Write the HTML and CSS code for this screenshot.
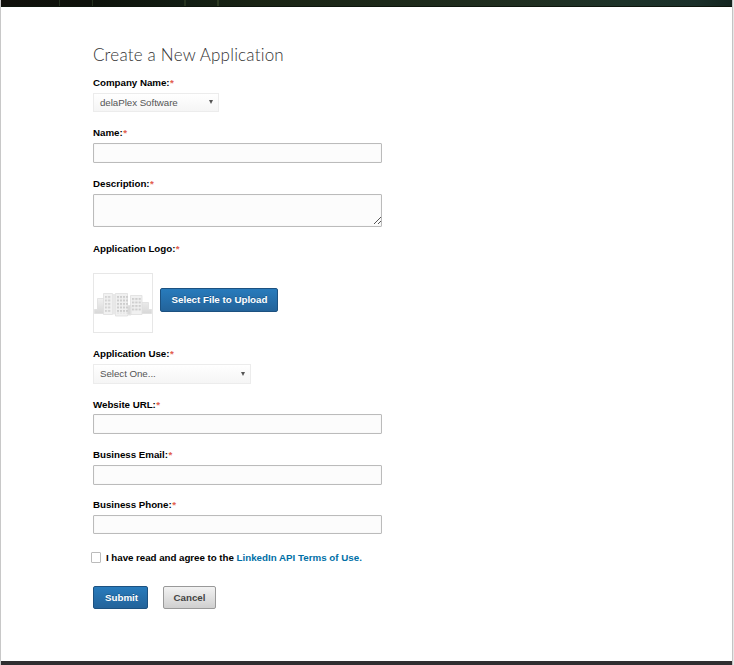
FILE: index.html
```html
<!DOCTYPE html>
<html lang="en">
<head>
<meta charset="utf-8">
<title>Create a New Application</title>
<link rel="stylesheet" href="styles.css">
</head>
<body>
<div class="page">
  <header class="topbar"></header>
  <main class="content">
    <h1 class="title">Create a New Application</h1>
    <form class="form">
      <div class="field">
        <label class="label">Company Name:<span class="req">*</span></label>
        <div class="select company"><span>delaPlex Software</span><i class="arrow"></i></div>
      </div>
      <div class="field">
        <label class="label" for="name">Name:<span class="req">*</span></label>
        <input class="input" id="name" type="text">
      </div>
      <div class="field">
        <label class="label" for="desc">Description:<span class="req">*</span></label>
        <div class="area" id="desc">
          <svg class="grip" width="7" height="7" viewBox="0 0 7 7" shape-rendering="crispEdges" fill="#555"><path d="M0 6h1v1H0zM1 5h1v1H1zM2 4h1v1H2zM3 3h1v1H3zM4 2h1v1H4zM5 1h1v1H5zM6 0h1v1H6zM4 6h1v1H4zM5 5h1v1H5zM6 4h1v1H6z"/></svg>
        </div>
      </div>
      <div class="field">
        <label class="label">Application Logo:<span class="req">*</span></label>
        <div class="upload">
          <div class="logo">
            <svg width="58" height="58" viewBox="0 0 58 58">
              <defs>
                <linearGradient id="shade" x1="0" y1="0" x2="0" y2="1"><stop offset="0" stop-color="#f1f1f1"/><stop offset="1" stop-color="#d8d8d8"/></linearGradient>
                <pattern id="win3" width="3.2" height="3.5" patternUnits="userSpaceOnUse" x="11" y="22"><rect width="2" height="2" fill="#d2d2d2"/></pattern>
                <pattern id="win4" width="3" height="3.5" patternUnits="userSpaceOnUse" x="23" y="22"><rect width="2" height="2" fill="#cecece"/></pattern>
                <pattern id="win5" width="3.3" height="3.5" patternUnits="userSpaceOnUse" x="38" y="24"><rect width="2.2" height="2" fill="#cecece"/></pattern>
              </defs>
              <g fill="url(#shade)" stroke="#dedede" stroke-width=".8">
                <path d="M.5 35.500h3v-11h7v15h-10zM47.500 28.500h7v7h3v4h-10z"/>
                <path d="M9.500 19.500h9v21h-9zM36.500 21.500h11.500v19h-11.500z" fill="#f1f1f1"/>
                <path d="M21.500 19.500h12v12h3.500v9.500h-3.500v1h-12z" fill="#f0f0f0"/>
              </g>
              <path d="M18.500 20h3v20.500h-3z" fill="#e8e8e8"/>
              <path d="M33.500 32.500l3-1v9h-3z" fill="#dadada"/>
              <path d="M11 22h6v16h-6z" fill="url(#win3)"/>
              <path d="M23 22h11v17.500H23z" fill="url(#win4)"/>
              <path d="M38 24h9v14h-9z" fill="url(#win5)"/>
            </svg>
          </div>
          <button type="button" class="btn primary file"><span>Select File to Upload</span></button>
        </div>
      </div>
      <div class="field">
        <label class="label">Application Use:<span class="req">*</span></label>
        <div class="select use"><span>Select One...</span><i class="arrow"></i></div>
      </div>
      <div class="field url">
        <label class="label" for="url">Website URL:<span class="req">*</span></label>
        <input class="input" id="url" type="text">
      </div>
      <div class="field">
        <label class="label" for="email">Business Email:<span class="req">*</span></label>
        <input class="input" id="email" type="text">
      </div>
      <div class="field">
        <label class="label" for="phone">Business Phone:<span class="req">*</span></label>
        <input class="input phone" id="phone" type="text">
      </div>
      <div class="agree"><input class="check" type="checkbox"><span class="terms">I have read and agree to the <a class="link">LinkedIn API Terms of Use.</a></span></div>
      <div class="actions">
        <button type="button" class="btn primary submit">Submit</button>
        <button type="button" class="btn cancel">Cancel</button>
      </div>
    </form>
  </main>
  <footer class="bottombar"></footer>
</div>
</body>
</html>
```
FILE: styles.css
```css
* { box-sizing: border-box; }
body {
  margin: 0;
  background: linear-gradient(90deg, #c8c8c8, #e8e8e8);
  font-family: "Liberation Sans", Arial, sans-serif;
  font-size: 9.75px;
  overflow: hidden;
}
.page {
  display: flex;
  flex-direction: column;
  width: 731px;
  height: 665px;
  margin-left: 1px;
  background: #fff;
  box-shadow: 1px 0 #c4c4c4;
}
.topbar {
  height: 7px;
  flex: none;
  border-bottom: 1px solid #0d150c;
  background:
    linear-gradient(#24301f, #24301f) 58px 0 / 1px 7px no-repeat,
    linear-gradient(#24301f, #24301f) 91px 0 / 1px 7px no-repeat,
    linear-gradient(#26331f, #26331f) 183px 0 / 2px 7px no-repeat,
    linear-gradient(#2c3a22, #2c3a22) 216px 0 / 2px 7px no-repeat,
    linear-gradient(90deg, #11110c 0, #0e120b 12%, #121d13 25%, #1a2414 35%, #202e20 70%, #1e3329 85%, #1b302a 95%, #142520 100%);
}
.content { flex: 1; padding: 38px 0 0 92px; }
.bottombar { height: 4px; flex: none; background: #2f2e30; }
.title {
  margin: 0;
  height: 32px;
  font: 300 17px/20px Lato, sans-serif;
  letter-spacing: .2px;
  color: #333;
  white-space: nowrap;
}
.form {
  display: grid;
  grid-template-rows: 50px 51px 65px 105px 51px 50px 50px 53px 34px 23px;
}
.label {
  display: block;
  height: 16px;
  line-height: 12px;
  font-weight: bold;
  letter-spacing: -.03px;
  color: #000;
  white-space: nowrap;
}
.url .label { height: 15px; }
.req { color: #e2604f; margin-left: .5px; }
.select {
  display: flex;
  align-items: center;
  justify-content: space-between;
  height: 19px;
  padding: 0 5px 0 6px;
  border: 1px solid #ececec;
  background: linear-gradient(#fff, #f5f5f5);
  color: #555;
  letter-spacing: -.05px;
}
.company { width: 126px; }
.use { width: 158px; height: 20px; padding-bottom: 1px; }
.arrow {
  border: 2.5px solid transparent;
  border-top: 4px solid #555;
  border-bottom: 0;
  margin-bottom: 1px;
}
.use .arrow { margin-bottom: 0; }
.input, .area {
  display: block;
  width: 289px;
  height: 20px;
  margin: 0;
  border: 1px solid #bbb;
  border-radius: 1px;
  background: #fcfcfc;
  box-shadow: inset 0 0 1px #ddd;
}
.phone { height: 19px; }
.area { position: relative; height: 33px; }
.grip { position: absolute; right: 0; bottom: 2px; }
.upload { display: flex; align-items: flex-start; gap: 7px; padding-top: 14px; }
.logo { width: 60px; height: 60px; border: 1px solid #e7e7e7; background: #fff; }
.logo svg { display: block; }
.btn {
  height: 23px;
  padding: 0;
  border: 1px solid #999;
  border-radius: 2px;
  font: bold 9.75px/21px "Liberation Sans", Arial, sans-serif;
  white-space: nowrap;
}
.primary {
  color: #fff;
  border-color: #1c5180;
  background: linear-gradient(#287bbc, #23639a);
  text-shadow: 0 -1px rgba(0, 0, 0, .2);
}
.file { width: 118px; height: 24px; margin-top: 15px; padding: 0 0 1px 1px; }
.agree {
  display: flex;
  align-items: flex-start;
  gap: 5px;
  margin-left: -2px;
  line-height: 12px;
  font-weight: bold;
  white-space: nowrap;
}
.terms { color: #000; letter-spacing: -.04px; }
.check {
  appearance: none;
  width: 10px;
  height: 11px;
  margin: 0;
  border: 1px solid #bbb;
  border-radius: 1px;
  background: #fff;
}
.link { color: #006fa6; letter-spacing: .01px; }
.actions { display: flex; gap: 15px; }
.submit { width: 55px; padding-left: 2px; }
.cancel { width: 53px; color: #444; background: linear-gradient(#f2f2f2, #cfcfcf); }
```
